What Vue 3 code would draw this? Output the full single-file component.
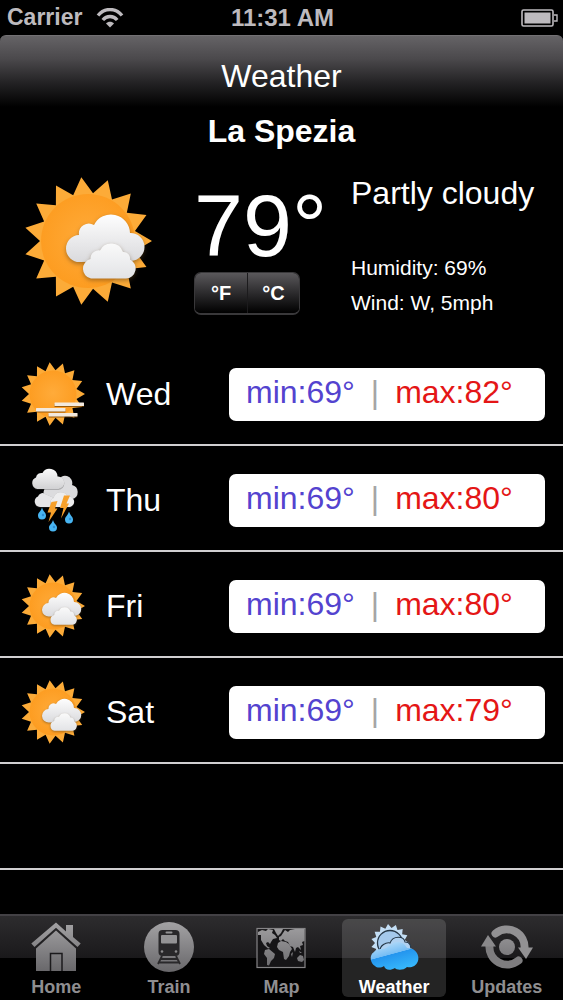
<script setup>
import { ref } from 'vue';

const unit = ref('F');
const activeTab = ref('Weather');

const current = {
  city: 'La Spezia',
  temp: 79,
  summary: 'Partly cloudy',
  humidity: '69%',
  wind: 'W, 5mph'
};

const forecast = [
  { day: 'Wed', icon: 'haze', min: 69, max: 82 },
  { day: 'Thu', icon: 'storm', min: 69, max: 80 },
  { day: 'Fri', icon: 'cloudy', min: 69, max: 80 },
  { day: 'Sat', icon: 'cloudy', min: 69, max: 79 }
];

const tabs = ['Home', 'Train', 'Map', 'Weather', 'Updates'];

const degrees = (f) => {
  return unit.value === 'F' ? f : Math.round((f - 32) * 5 / 9);
};

// Star polygon used for every sun
const star = (cx, cy, outer, inner, teeth) => {
  const points = [];
  for (let i = 0; i < teeth * 2; i++) {
    const r = i % 2 === 0 ? outer : inner;
    const a = Math.PI * i / teeth;
    points.push((cx + r * Math.cos(a)).toFixed(2) + ',' + (cy + r * Math.sin(a)).toFixed(2));
  }
  return points.join(' ');
};

const bigStar = star(64, 64, 64, 48, 15);
const tabStar = star(21, 21, 19, 15, 15);
</script>

<template>
  <div class="screen">
    <!-- Shared shapes and gradients -->
    <svg class="defs" width="0" height="0" aria-hidden="true">
      <defs>
        <radialGradient id="sunDisc" gradientUnits="userSpaceOnUse" cx="64" cy="62" r="50">
          <stop offset="0" stop-color="#ffab3a" />
          <stop offset="1" stop-color="#fd9c20" />
        </radialGradient>
        <linearGradient id="cloudBack" gradientUnits="userSpaceOnUse" x1="0" y1="36" x2="0" y2="86">
          <stop offset="0" stop-color="#ffffff" />
          <stop offset="1" stop-color="#d9d9dc" />
        </linearGradient>
        <linearGradient id="cloudFront" gradientUnits="userSpaceOnUse" x1="0" y1="66" x2="0" y2="102">
          <stop offset="0" stop-color="#fafafa" />
          <stop offset="1" stop-color="#e2e3e6" />
        </linearGradient>
        <linearGradient id="stormCloud" gradientUnits="userSpaceOnUse" x1="0" y1="2" x2="0" y2="44">
          <stop offset="0" stop-color="#fafafa" />
          <stop offset="1" stop-color="#cfcfd1" />
        </linearGradient>
        <linearGradient id="tabGray" gradientUnits="userSpaceOnUse" x1="0" y1="0" x2="0" y2="50">
          <stop offset="0" stop-color="#a3a2a4" />
          <stop offset="1" stop-color="#68676a" />
        </linearGradient>
        <linearGradient id="tabBlue" gradientUnits="userSpaceOnUse" x1="20" y1="22" x2="27" y2="48">
          <stop offset="0" stop-color="#a9d6f8" />
          <stop offset="0.38" stop-color="#74bdf5" />
          <stop offset="0.4" stop-color="#2495ee" />
          <stop offset="1" stop-color="#36b6fb" />
        </linearGradient>
        <symbol id="sun" viewBox="0 0 128 128">
          <polygon :points="bigStar" fill="#fcab38" />
          <circle cx="64" cy="64" r="47" fill="url(#sunDisc)" />
        </symbol>
      </defs>
    </svg>

    <div class="status-bar">
      <div class="carrier">
        <span>Carrier</span>
        <svg class="wifi" viewBox="0 0 28 20" aria-hidden="true">
          <path d="M2 7.5 C8.500 -0.500 19.500 -0.500 26 7.500" />
          <path d="M6.800 12 C10.700 7.300 17.300 7.300 21.200 12" />
          <path class="dot" d="M14 19.500 L10 15.500 C12 13.200 16 13.200 18 15.500 Z" />
        </svg>
      </div>
      <span class="time">11:31 AM</span>
      <svg class="battery" viewBox="0 0 37 18" aria-hidden="true">
        <rect x="1" y="1" width="31" height="16" rx="1.500" fill="none" stroke="#bdbabe" stroke-width="1.600" />
        <rect x="3.500" y="3.500" width="26" height="11" fill="#bdbabe" />
        <path d="M33 6 h3 v6 h-3" fill="none" stroke="#bdbabe" stroke-width="1.400" />
      </svg>
    </div>

    <header class="title-bar">
      <h1>Weather</h1>
    </header>

    <main class="content">
      <h2 class="city">{{ current.city }}</h2>

      <section class="current">
        <svg class="current-icon" viewBox="0 0 128 128" role="img" aria-label="Partly cloudy">
          <use href="#sun" width="128" height="128" />
          <path class="cloud" fill="url(#cloudBack)" d="M56 85 A13.500 13.500 0 0 1 55 58 A10 10 0 0 1 70 48 A19 19 0 0 1 106 56 A14 14 0 0 1 107 84 Z" />
          <path class="cloud" fill="url(#cloudFront)" d="M67 101.500 A10 10 0 0 1 66.500 82 A8 8 0 0 1 76 73.500 A12.500 12.500 0 0 1 99 75 A6.500 6.500 0 0 1 106 82.500 A10 10 0 0 1 102 101.500 Z" />
        </svg>

        <div class="reading">
          <div class="temp">{{ degrees(current.temp) }}°</div>
          <div class="units">
            <button type="button" :aria-pressed="unit === 'F'" @click="unit = 'F'">°F</button>
            <button type="button" :aria-pressed="unit === 'C'" @click="unit = 'C'">°C</button>
          </div>
        </div>

        <div class="details">
          <p class="summary">{{ current.summary }}</p>
          <p>Humidity: {{ current.humidity }}</p>
          <p>Wind: {{ current.wind }}</p>
        </div>
      </section>

      <ul class="forecast">
        <li v-for="item in forecast" :key="item.day" class="row">
          <svg class="row-icon" viewBox="0 0 128 128" aria-hidden="true">
            <template v-if="item.icon === 'haze'">
              <use href="#sun" width="128" height="128" />
              <g class="bars">
                <rect x="67" y="81" width="59" height="7" rx="1" />
                <rect x="30" y="92" width="59" height="7" rx="1" />
                <rect x="55" y="102" width="58" height="7" rx="1" />
              </g>
            </template>

            <template v-else-if="item.icon === 'storm'">
              <path class="puff" fill="#dcdcde" d="M55 62 A14 14 0 0 1 50 38 L74 26 A14 14 0 0 1 102 34 A14.500 14.500 0 0 1 103 62 Z" />
              <path class="puff" fill="#e6e6e8" d="M38 78 A11 11 0 0 1 34 57 A9 9 0 0 1 48 52 L66 60 V78 Z" />
              <path class="puff" fill="#ededee" d="M66 78 A9.500 9.500 0 0 1 65 60 A15 15 0 0 1 93 57 A10.500 10.500 0 0 1 98 78 Z" />
              <path class="puff" fill="url(#stormCloud)" d="M33 42 A12 12 0 0 1 30 19 A11 11 0 0 1 43 10 A16 16 0 0 1 73 17 A12.500 12.500 0 0 1 75 42 Z" />
              <path fill="#f7a02a" d="M61 68 L73 66 L68 81 L73 81 L55 108 L60 89 L53 89 Z" />
              <path fill="#f7a02a" d="M86 55 L98 55 L91 71 L96 71 L80 101 L85 80 L78 80 Z" />
              <g fill="#48b5f2">
                <path d="M42 79 C44 87 50 89 50 95 A8 8 0 0 1 34 95 C34 89 40 87 42 79 Z" />
                <path d="M96 87 C98 95 104 97 104 103 A8 8 0 0 1 88 103 C88 97 94 95 96 87 Z" />
                <path d="M64 104 C66 112 72 114 72 119 A8 8 0 0 1 56 119 C56 114 62 112 64 104 Z" />
              </g>
              <g fill="#2f8fd6">
                <circle cx="44" cy="94" r="2.500" />
                <circle cx="98" cy="102" r="2.500" />
                <circle cx="66" cy="118" r="2.500" />
              </g>
            </template>

            <template v-else>
              <use href="#sun" width="128" height="128" />
              <path class="cloud" fill="url(#cloudBack)" d="M56 85 A13.500 13.500 0 0 1 55 58 A10 10 0 0 1 70 48 A19 19 0 0 1 106 56 A14 14 0 0 1 107 84 Z" />
              <path class="cloud" fill="url(#cloudFront)" d="M67 101.500 A10 10 0 0 1 66.500 82 A8 8 0 0 1 76 73.500 A12.500 12.500 0 0 1 99 75 A6.500 6.500 0 0 1 106 82.500 A10 10 0 0 1 102 101.500 Z" />
            </template>
          </svg>

          <span class="day">{{ item.day }}</span>

          <div class="range">
            <span class="min">min:{{ degrees(item.min) }}°</span>
            <span class="divider">|</span>
            <span class="max">max:{{ degrees(item.max) }}°</span>
          </div>
        </li>
        <li class="row" aria-hidden="true"></li>
      </ul>
    </main>

    <nav class="tab-bar">
      <a
        v-for="tab in tabs"
        :key="tab"
        href="#"
        class="tab"
        :class="{ active: activeTab === tab }"
        @click.prevent="activeTab = tab"
      >
        <svg class="tab-icon" viewBox="0 0 50 50" aria-hidden="true">
          <g v-if="tab === 'Home'" fill="url(#tabGray)">
            <path d="M25 0.500 L35 9.500 V3 H42 V15 L49.700 21.500 L46.500 25 L25 5.800 L3.500 25 L0.300 21.500 Z" />
            <path d="M25 8.500 L45 26.500 V49 H5 V26.500 Z" />
            <path d="M19.500 49 V31.500 H31 V49" fill="none" stroke="#1b1a1c" stroke-width="1.500" />
          </g>

          <g v-else-if="tab === 'Train'">
            <circle cx="25" cy="25" r="25" fill="url(#tabGray)" />
            <rect x="14.500" y="8" width="21" height="26" rx="4" fill="#29282a" />
            <rect x="17" y="13" width="16" height="8.500" rx="1" fill="#949395" />
            <rect x="21.500" y="9.500" width="7" height="2" rx="1" fill="#949395" />
            <circle cx="18" cy="29.500" r="1.300" fill="#8b8a8c" />
            <circle cx="32" cy="29.500" r="1.300" fill="#8b8a8c" />
            <path d="M18 34 L14 42 M32 34 L36 42 M17 37 H33 M15.500 40.500 H34.500" fill="none" stroke="#29282a" stroke-width="1.800" />
          </g>

          <g v-else-if="tab === 'Map'" fill="url(#tabGray)">
            <rect x="1" y="6.500" width="48" height="39" fill="#161517" stroke="#858486" stroke-width="1.200" />
            <path d="M2 10 L6 8 L10 9 L12 7 L17 8 L16 11 L19 13 L21 16 L17 17 L15 20 L14 22 L12 20 L10 21 L11 24 L14 26 L12 26.500 L8 23 L5 18 L5 13 L2 13 Z" />
            <path d="M18 7 H27 L25 11 L22 14 L20 11 Z" />
            <path d="M9 28 L13 27 L19 32 L18 36 L15 39 L13 43.500 L11 43 L11 36 L8 32 Z" />
            <path d="M22 21 L25 19 L30 20 L33 22 L36 27 L34 30 L33 34 L30 38 L28 37 L27 30 L23 28 L21 25 Z" />
            <path d="M23 18 L23 15 L25 14 L27 11 L29 8 L32 10 L34 8 L39 7 H48.500 V19 L46 20 L47 23 L44 24 L45 28 L42 25 L40 26 L39 30 L37 25 L34 24 L32 20 L29 19 L27 17 L25 19 Z" />
            <path d="M41 36 L44 33 L47 34 L48 38 L46 40 L42 39 Z" />
            <path d="M35 32 L37 30 L36 35 Z M43 29 L46 31 L44 31 Z" />
          </g>

          <g v-else-if="tab === 'Weather'">
            <polygon :points="tabStar" fill="#c3def5" />
            <circle cx="21" cy="21" r="12.500" fill="#a4c9ec" stroke="#263848" stroke-width="1.300" />
            <path d="M11 30 C10 23 18 20 21 21 C24 13 35 14 36 20 C41 20 43 24 41 29 Z" fill="#b0d2f2" stroke="#263848" stroke-width="1.100" />
            <path d="M6 44 C1 41 0 33 5 30 C7 27 11 27 13 27 C19 27 22 20 29 20 C34 20 37 24 38 26 C46 25 51 33 49 39 C47 45 41 46 38 45 C34 49 27 48 26 46 C21 49 16 48 15 44 C12 46 8 46 6 44 Z" fill="url(#tabBlue)" />
          </g>

          <g v-else fill="url(#tabGray)">
            <circle cx="25" cy="25" r="8" />
            <path d="M13.500 11.500 A17.800 17.800 0 0 1 42.500 27" fill="none" stroke="#929193" stroke-width="8" stroke-linecap="round" />
            <path d="M36 25.500 H51 L44 37 Z" fill="#929193" />
            <path d="M36.500 38.500 A17.800 17.800 0 0 1 7.500 23" fill="none" stroke="#7e7d7f" stroke-width="8" stroke-linecap="round" />
            <path d="M14 24.500 H-1 L6 13 Z" fill="#8a898b" />
          </g>
        </svg>
        <span>{{ tab }}</span>
      </a>
    </nav>
  </div>
</template>

<style>
body {
  margin: 0;
  background: #000;
}
</style>

<style scoped>
.screen {
  display: flex;
  flex-direction: column;
  min-height: 100vh;
  background: #000;
  color: #fff;
  font-family: "Liberation Sans", Arial, sans-serif;
}

.defs {
  position: absolute;
}

h1,
h2,
p,
ul {
  margin: 0;
  padding: 0;
}

.status-bar {
  display: grid;
  grid-template-columns: 1fr auto 1fr;
  align-items: center;
  height: 35px;
  padding: 0 5px 0 7px;
  color: #bdbabe;
  font-size: 23px;
  font-weight: bold;
}

.carrier {
  display: flex;
  align-items: center;
  gap: 14px;
}

.wifi {
  width: 28px;
  height: 20px;
  fill: none;
  stroke: #bdbabe;
  stroke-width: 3.4;
}

.wifi .dot {
  fill: #bdbabe;
  stroke: none;
}

.time {
  font-size: 24px;
}

.battery {
  justify-self: end;
  width: 37px;
  height: 18px;
}

.title-bar {
  height: 72px;
  box-sizing: border-box;
  padding-top: 22px;
  border-top: 1px solid #737174;
  border-radius: 6px 6px 0 0;
  background: linear-gradient(#656366, #4b494c 32%, #232224 66%, #000);
  text-align: center;
}

.title-bar h1 {
  font-size: 32px;
  line-height: 36px;
  font-weight: normal;
}

.content {
  flex: 1;
}

.city {
  padding: 6px 0 0;
  font-size: 32px;
  line-height: 36px;
  text-align: center;
}

.current {
  display: grid;
  grid-template-columns: 170px 157px 1fr;
  align-items: start;
  min-height: 191px;
  box-sizing: border-box;
  padding: 26px 0 0 24px;
}

.current-icon {
  width: 128px;
  height: 128px;
  margin-top: 2px;
}

.cloud {
  filter: drop-shadow(0 2px 2px rgba(90, 60, 20, 0.5));
}

.puff {
  filter: drop-shadow(0 1px 1px rgba(60, 60, 60, 0.6));
}

.bars {
  fill: #f3e9dd;
  filter: drop-shadow(0 2px 1px rgba(110, 60, 0, 0.7));
}

.reading {
  padding-top: 7px;
}

.temp {
  margin-bottom: 2px;
  font-size: 88px;
  line-height: 88px;
}

.units {
  display: inline-flex;
  overflow: hidden;
  border: 1px solid #39383a;
  border-bottom: 2px solid #39383a;
  border-radius: 7px;
}

.units button {
  width: 52px;
  height: 40px;
  padding: 0;
  border: none;
  background: linear-gradient(#5a585b, #2c2b2d 50%, #000);
  color: #fff;
  font-family: inherit;
  font-size: 20px;
  font-weight: bold;
  cursor: pointer;
}

.units button + button {
  border-left: 1px solid #1c1b1d;
}

.details {
  font-size: 21px;
  line-height: 35px;
}

.details .summary {
  margin-bottom: 39px;
  font-size: 32px;
  line-height: 36px;
  white-space: nowrap;
}

.forecast {
  list-style: none;
}

.row {
  display: grid;
  grid-template-columns: 64px 102px 1fr;
  gap: 21px;
  align-items: center;
  min-height: 106px;
  box-sizing: border-box;
  padding: 4px 18px 0 21px;
  border-bottom: 2px solid #d0cfd1;
  font-size: 32px;
  line-height: 36px;
}

.row-icon {
  width: 64px;
  height: 64px;
}

.range {
  display: flex;
  gap: 16px;
  padding: 6px 17px 11px;
  border-radius: 7px;
  background: #fff;
  white-space: nowrap;
}

.min {
  color: #5443cf;
}

.divider {
  color: #a5a5a5;
}

.max {
  color: #e41616;
}

.tab-bar {
  display: grid;
  grid-template-columns: repeat(5, 1fr);
  height: 86px;
  box-sizing: border-box;
  border-top: 2px solid #434145;
  background: linear-gradient(#2d2c2e, #1a191b 50%, #000 50%);
}

.tab {
  display: flex;
  flex-direction: column;
  align-items: center;
  margin: 3px 4px;
  padding-top: 3px;
  border-radius: 6px;
  color: #8f8e90;
  font-size: 18px;
  font-weight: bold;
  line-height: 20px;
  text-decoration: none;
}

.tab.active {
  background: rgba(255, 255, 255, 0.14);
  color: #fff;
}

.tab-icon {
  width: 50px;
  height: 50px;
  margin-bottom: 5px;
  overflow: visible;
}
</style>
